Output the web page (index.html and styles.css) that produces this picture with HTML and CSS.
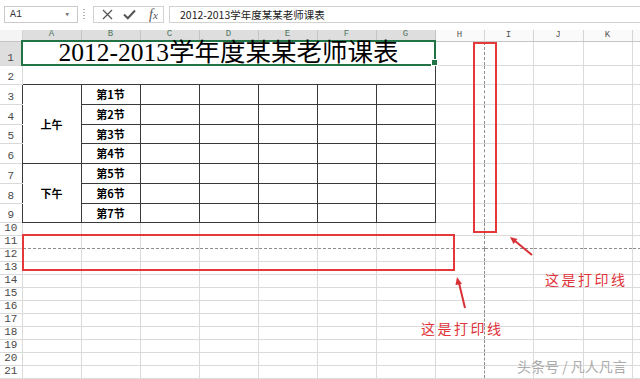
FILE: index.html
```html
<!DOCTYPE html>
<html lang="zh-CN">
<head>
<meta charset="utf-8">
<title>课表</title>
<link rel="stylesheet" href="styles.css">
</head>
<body>
<div class="app">
  <div class="fbar">
    <div class="namebox"><span>A1</span><span class="dd">&#9662;</span></div>
    <div class="grip"></div>
    <div class="fx-tools">
      <svg class="ic-x" width="11" height="11" viewBox="0 0 11 11"><path d="M1 1 L10 10 M10 1 L1 10" stroke="#555" stroke-width="1.3" fill="none"/></svg>
      <svg class="ic-ok" width="13" height="11" viewBox="0 0 13 11"><path d="M1 5.5 L4.8 9.3 L12 1.5" stroke="#555" stroke-width="2" fill="none"/></svg>
      <span class="fx"><i>f</i><i class="x">x</i></span>
    </div>
    <div class="formula">2012-2013学年度某某老师课表</div>
  </div>

  <table class="grid">
    <colgroup>
      <col class="c-hd"><col class="c-w"><col class="c-w"><col class="c-w"><col class="c-w"><col class="c-w"><col class="c-w"><col class="c-w"><col class="c-h"><col class="c-h"><col class="c-j"><col class="c-h"><col class="c-w">
    </colgroup>
    <tr class="r-h"><th class="corner"></th><th class="sel">A</th><th class="sel">B</th><th class="sel">C</th><th class="sel">D</th><th class="sel">E</th><th class="sel">F</th><th class="sel">G</th><th>H</th><th>I</th><th>J</th><th>K</th><th>L</th></tr>
    <tr class="h22"><th class="rsel">1</th><td colspan="7" class="title">2012-2013学年度某某老师课表</td><td class="pb"></td><td></td><td></td><td></td><td></td></tr>
    <tr class="h19"><th>2</th><td class="top"></td><td class="top"></td><td class="top"></td><td class="top"></td><td class="top"></td><td class="top"></td><td class="top end"></td><td class="pb"></td><td></td><td></td><td></td><td></td></tr>
    <tr class="h20"><th class="tl">3</th><td rowspan="4" class="bx lbl">上午</td><td class="bx lbl">第1节</td><td class="bx"></td><td class="bx"></td><td class="bx"></td><td class="bx"></td><td class="bx"></td><td class="pb"></td><td></td><td></td><td></td><td></td></tr>
    <tr class="h20"><th class="tl">4</th><td class="bx lbl">第2节</td><td class="bx"></td><td class="bx"></td><td class="bx"></td><td class="bx"></td><td class="bx"></td><td class="pb"></td><td></td><td></td><td></td><td></td></tr>
    <tr class="h19"><th class="tl">5</th><td class="bx lbl">第3节</td><td class="bx"></td><td class="bx"></td><td class="bx"></td><td class="bx"></td><td class="bx"></td><td class="pb"></td><td></td><td></td><td></td><td></td></tr>
    <tr class="h20"><th class="tl">6</th><td class="bx lbl">第4节</td><td class="bx"></td><td class="bx"></td><td class="bx"></td><td class="bx"></td><td class="bx"></td><td class="pb"></td><td></td><td></td><td></td><td></td></tr>
    <tr class="h20"><th class="tl">7</th><td rowspan="3" class="bx lbl">下午</td><td class="bx lbl">第5节</td><td class="bx"></td><td class="bx"></td><td class="bx"></td><td class="bx"></td><td class="bx"></td><td class="pb"></td><td></td><td></td><td></td><td></td></tr>
    <tr class="h20"><th class="tl">8</th><td class="bx lbl">第6节</td><td class="bx"></td><td class="bx"></td><td class="bx"></td><td class="bx"></td><td class="bx"></td><td class="pb"></td><td></td><td></td><td></td><td></td></tr>
    <tr class="h19"><th class="tl">9</th><td class="bx lbl">第7节</td><td class="bx"></td><td class="bx"></td><td class="bx"></td><td class="bx"></td><td class="bx"></td><td class="pb"></td><td></td><td></td><td></td><td></td></tr>
    <tr class="h13"><th>10</th><td></td><td></td><td></td><td></td><td></td><td></td><td></td><td class="pb"></td><td></td><td></td><td></td><td></td></tr>
    <tr class="h12 brk"><th>11</th><td></td><td></td><td></td><td></td><td></td><td></td><td></td><td class="pb"></td><td></td><td></td><td></td><td></td></tr>
    <tr class="h12"><th>12</th><td></td><td></td><td></td><td></td><td></td><td></td><td></td><td class="pb"></td><td></td><td></td><td></td><td></td></tr>
    <tr class="h13"><th>13</th><td></td><td></td><td></td><td></td><td></td><td></td><td></td><td class="pb"></td><td></td><td></td><td></td><td></td></tr>
    <tr class="h12"><th>14</th><td></td><td></td><td></td><td></td><td></td><td></td><td></td><td class="pb"></td><td></td><td></td><td></td><td></td></tr>
    <tr class="h13"><th>15</th><td></td><td></td><td></td><td></td><td></td><td></td><td></td><td class="pb"></td><td></td><td></td><td></td><td></td></tr>
    <tr class="h12"><th>16</th><td></td><td></td><td></td><td></td><td></td><td></td><td></td><td class="pb"></td><td></td><td></td><td></td><td></td></tr>
    <tr class="h13"><th>17</th><td></td><td></td><td></td><td></td><td></td><td></td><td></td><td class="pb"></td><td></td><td></td><td></td><td></td></tr>
    <tr class="h12"><th>18</th><td></td><td></td><td></td><td></td><td></td><td></td><td></td><td class="pb"></td><td></td><td></td><td></td><td></td></tr>
    <tr class="h12"><th>19</th><td></td><td></td><td></td><td></td><td></td><td></td><td></td><td class="pb"></td><td></td><td></td><td></td><td></td></tr>
    <tr class="h13"><th>20</th><td></td><td></td><td></td><td></td><td></td><td></td><td></td><td class="pb"></td><td></td><td></td><td></td><td></td></tr>
    <tr class="h12"><th>21</th><td></td><td></td><td></td><td></td><td></td><td></td><td></td><td class="pb"></td><td></td><td></td><td></td><td></td></tr>
    <tr class="h12"><th>22</th><td></td><td></td><td></td><td></td><td></td><td></td><td></td><td class="pb"></td><td></td><td></td><td></td><td></td></tr>
  </table>

  <svg class="marks" width="640" height="379" viewBox="0 0 640 379">
    <rect x="474" y="43" width="22" height="189" fill="none" stroke="#e5383b" stroke-width="2"/>
    <rect x="23" y="235" width="431" height="35" fill="none" stroke="#e5383b" stroke-width="2"/>
    <line x1="532" y1="255" x2="515" y2="241" stroke="#d93035" stroke-width="2"/>
    <polygon points="510,237 517.5,239 513.5,244" fill="#d93035"/>
    <line x1="465" y1="308" x2="459" y2="283" stroke="#d93035" stroke-width="2"/>
    <polygon points="457,277 462,284 455.5,285" fill="#d93035"/>
  </svg>
  <div class="note n1">这是打印线</div>
  <div class="note n2">这是打印线</div>
  <div class="wm">头条号 / 凡人凡言</div>
</div>
</body>
</html>
```

FILE: styles.css
```css
* { box-sizing: border-box; }
html, body { margin: 0; padding: 0; background: #fff; overflow: hidden; }
body { width: 640px; height: 379px; font-family: "Noto Sans CJK SC", "Noto Sans", sans-serif; }

.app { position: relative; width: 640px; height: 379px; overflow: hidden; }

/* formula bar */
.fbar { height: 30px; display: flex; align-items: flex-start; padding: 6px 0 0 4px; }
.namebox {
  width: 74px; height: 17px; border: 1px solid #cacaca;
  display: flex; align-items: center; justify-content: space-between;
  padding: 0 7px 0 5px; font: 10px "Liberation Mono", monospace; color: #333;
}
.dd { font-size: 9px; color: #777; }
.grip {
  width: 2px; height: 11px; margin: 3px 8px 0 5px;
  background: repeating-linear-gradient(#b4b4b4 0 1px, transparent 1px 3px);
}
.fx-tools {
  width: 71px; height: 17px; border: 1px solid #d2d2d2;
  display: flex; align-items: center; padding-left: 8px;
}
.ic-x { margin-right: 10px; }
.ic-ok { margin-right: 13px; }
.fx { font-family: "Liberation Serif", serif; font-size: 14px; color: #555; line-height: 14px; }
.fx .x { font-size: 11px; }
.formula {
  flex: 1; margin: 0 -2px 0 5px; height: 17px; border: 1px solid #d2d2d2;
  padding-left: 10px; font-size: 10.5px; line-height: 15px; color: #222;
  white-space: nowrap; overflow: hidden;
}

/* sheet grid */
.grid { border-collapse: collapse; table-layout: fixed; width: 691px; }
.c-hd { width: 22px; }
.c-w { width: 59px; }
.c-h { width: 49px; }
.c-j { width: 50px; }

.grid td, .grid th {
  padding: 0; border: none;
  border-right: 1px solid #dadada; border-bottom: 1px solid #dadada;
  white-space: nowrap; overflow: visible;
}
.grid th {
  font: 11px/11px "Liberation Mono", monospace; color: #4a4a4a; font-weight: normal;
  background: #fff; text-align: center; vertical-align: bottom; padding-bottom: 1px;
}
.r-h { height: 11px; }
.r-h th {
  font-size: 9px; line-height: 9px; color: #555; background: #fafafa;
  border-right: 1px solid #d4d4d4; border-bottom: 1px solid #c6c6c6; padding-bottom: 1px;
}
.r-h th.sel { background: #dedede; color: #4f7560; border-right-color: #c4c4c4; }
.r-h th.corner { background: #f4f4f4; }
.grid th.rsel { background: #dedede; }

.h22 { height: 22px; }
.h20 { height: 20px; }
.h19 { height: 19px; }
.h13 { height: 13px; }
.h12 { height: 12px; }

.title {
  position: relative;
  font: 25.5px/22px "Liberation Serif", "Noto Sans CJK SC", serif; color: #000;
  text-align: center; vertical-align: bottom;
  border: 2px solid #217346 !important;
}
.title::after {
  content: ""; position: absolute; right: -4px; bottom: -2px;
  width: 5px; height: 5px; background: #217346; border: 1px solid #fff;
}

.grid td.top { border-right: none; border-bottom: 1px solid #3a3a3a; }
.grid td.top.end { border-right: 1px solid #3a3a3a; }
.grid td.bx { border-right: 1px solid #3a3a3a; border-bottom: 1px solid #3a3a3a; }
.grid th.tl { border-right: 1px solid #3a3a3a; }
.lbl { font-size: 11px; line-height: 12px; font-weight: 700; text-align: center; color: #000; }

.grid td.pb { border-right: 1px dashed #8e8e8e; }
.grid .brk td { border-bottom: 1px dashed #8e8e8e; }

/* annotations */
.marks { position: absolute; left: 0; top: 0; pointer-events: none; }
.note {
  position: absolute; color: #e0343a; font-size: 14px; line-height: 16px;
  letter-spacing: 2.5px; white-space: nowrap;
}
.n1 { left: 545px; top: 271px; }
.n2 { left: 421px; top: 320px; }
.wm {
  position: absolute; left: 517px; top: 358px; font-size: 14px; line-height: 16px;
  color: #ababab; white-space: nowrap;
}
```
